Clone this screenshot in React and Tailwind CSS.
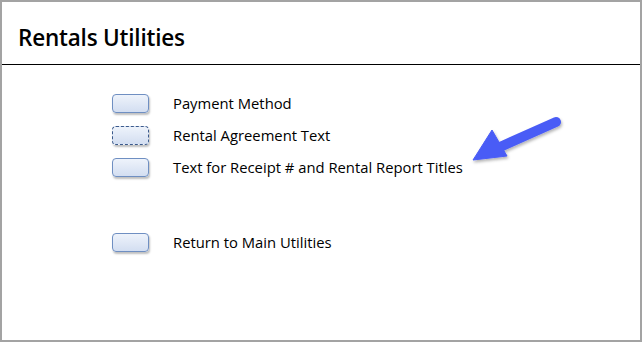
export default function App() {
  const rows = [
    { label: "Payment Method", dashed: false },
    { label: "Rental Agreement Text", dashed: true },
    { label: "Text for Receipt # and Rental Report Titles", dashed: false },
  ];
  const Btn = ({ dashed }) => (
    <div
      className={`w-[37px] h-[19px] rounded-[4px] border ${dashed ? "border-dashed border-[#3b5a8c]" : "border-[#6f8fc2]"} bg-gradient-to-b from-[#eef3fb] to-[#d3def1] shadow-[1px_2px_2px_rgba(0,0,0,0.25)]`}
    />
  );
  return (
    <div
      className="relative w-[642px] h-[342px] border-2 border-[#a3a3a3] bg-white text-black"
      style={{ fontFamily: '"Open Sans", "Noto Sans", sans-serif' }}
    >
      <div className="h-[63px] border-b border-black flex items-center pl-[16px] pt-[11px]">
        <h1 className="text-[22.5px] font-semibold tracking-[-0.2px] leading-none">Rentals Utilities</h1>
      </div>
      <div className="pl-[110px] pt-[22px] flex flex-col">
        {rows.map((r) => (
          <div key={r.label} className="flex items-center h-[32px]">
            <Btn dashed={r.dashed} />
            <span className="ml-[24px] text-[14.8px]">{r.label}</span>
          </div>
        ))}
        <div className="flex items-center h-[32px] mt-[43px]">
          <Btn dashed={false} />
          <span className="ml-[24px] text-[14.8px]">Return to Main Utilities</span>
        </div>
      </div>
      <svg className="absolute left-[458px] top-[103px]" width="120" height="70" viewBox="0 0 120 70">
        <defs>
          <filter id="sh" x="-20%" y="-20%" width="140%" height="140%">
            <feDropShadow dx="1" dy="2" stdDeviation="1.5" floodColor="#000" floodOpacity="0.3" />
          </filter>
        </defs>
        <g filter="url(#sh)" fill="#4a5cf6" stroke="#4a5cf6">
          <line x1="96" y1="17" x2="40" y2="42" strokeWidth="10" strokeLinecap="round" />
          <polygon points="13,55 32,25 47,51" strokeWidth="1" strokeLinejoin="round" />
        </g>
      </svg>
    </div>
  );
}
